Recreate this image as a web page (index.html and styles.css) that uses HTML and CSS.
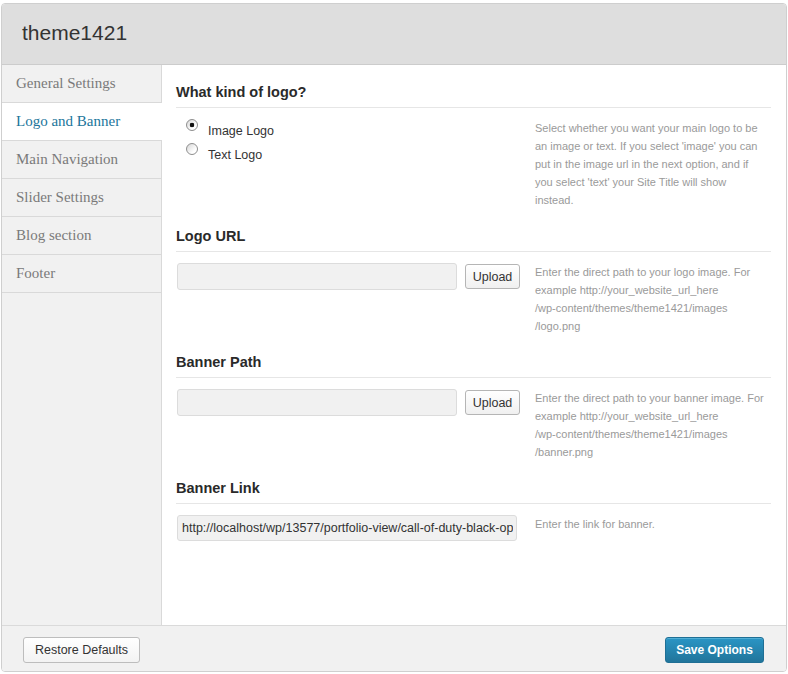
FILE: index.html
```html
<!DOCTYPE html>
<html>
<head>
<meta charset="utf-8">
<title>theme1421</title>
<link rel="stylesheet" href="styles.css">
</head>
<body>
<div class="panel">
  <div class="header"><h1 class="title">theme1421</h1></div>
  <div class="main">
    <ul class="sidebar">
      <li class="nav-item">General Settings</li>
      <li class="nav-item active">Logo and Banner</li>
      <li class="nav-item">Main Navigation</li>
      <li class="nav-item">Slider Settings</li>
      <li class="nav-item">Blog section</li>
      <li class="nav-item">Footer</li>
    </ul>
    <div class="content">
      <div class="section">
        <h3 class="heading">What kind of logo?</h3>
        <div class="row">
          <div class="controls">
            <ul class="radios">
              <li class="radio-item"><input class="radio" type="radio" name="logo" checked><span class="radio-label">Image Logo</span></li>
              <li class="radio-item"><input class="radio" type="radio" name="logo"><span class="radio-label">Text Logo</span></li>
            </ul>
          </div>
          <div class="desc">Select whether you want your main logo to be<br>an image or text. If you select 'image' you can<br>put in the image url in the next option, and if<br>you select 'text' your Site Title will show<br>instead.</div>
        </div>
      </div>
      <div class="section">
        <h3 class="heading">Logo URL</h3>
        <div class="row">
          <div class="controls upload-row">
            <input class="text-input" type="text">
            <button class="upload-btn">Upload</button>
          </div>
          <div class="desc">Enter the direct path to your logo image. For<br>example http://your_website_url_here<br>/wp-content/themes/theme1421/images<br>/logo.png</div>
        </div>
      </div>
      <div class="section">
        <h3 class="heading">Banner Path</h3>
        <div class="row">
          <div class="controls upload-row">
            <input class="text-input" type="text">
            <button class="upload-btn">Upload</button>
          </div>
          <div class="desc">Enter the direct path to your banner image. For<br>example http://your_website_url_here<br>/wp-content/themes/theme1421/images<br>/banner.png</div>
        </div>
      </div>
      <div class="section">
        <h3 class="heading">Banner Link</h3>
        <div class="row">
          <div class="controls">
            <input class="text-input wide" type="text" value="http://localhost/wp/13577/portfolio-view/call-of-duty-black-ops">
          </div>
          <div class="desc">Enter the link for banner.</div>
        </div>
      </div>
    </div>
  </div>
  <div class="footer">
    <button class="btn-restore">Restore Defaults</button>
    <button class="btn-save">Save Options</button>
  </div>
</div>
</body>
</html>
```

FILE: styles.css
```css
* { box-sizing: border-box; }

body {
  margin: 0;
  padding: 3px 0 0 1px;
  background: #fff;
  font-family: "Liberation Sans", Arial, sans-serif;
  color: #333;
}

.panel {
  width: 786px;
  height: 669px;
  border: 1px solid #cfcfcf;
  border-radius: 4px;
  overflow: hidden;
  background: #fff;
  display: flex;
  flex-direction: column;
}

.header {
  height: 61px;
  flex: none;
  background: #dedede;
  border-bottom: 1px solid #cccccc;
  padding: 17px 0 0 20px;
}

.title {
  margin: 0;
  font-size: 21px;
  line-height: 24px;
  font-weight: normal;
  color: #333;
}

.main {
  display: flex;
  height: 560px;
  flex: none;
}

.sidebar {
  list-style: none;
  margin: 0;
  padding: 0;
  width: 160px;
  flex: none;
  background: #f1f1f1;
  border-right: 1px solid #d9d9d9;
}

.nav-item {
  height: 38px;
  line-height: 37px;
  padding-left: 14px;
  border-bottom: 1px solid #d9d9d9;
  font-family: "Liberation Serif", "Times New Roman", serif;
  font-size: 15px;
  color: #7a7a7a;
}

.nav-item.active {
  background: #fff;
  color: #21759b;
  margin-right: -1px;
}

.content {
  flex: 1;
  padding: 0 15px 0 14px;
}

.section {
  padding-top: 18px;
}

.heading {
  margin: 0;
  font-size: 14.5px;
  line-height: 18px;
  font-weight: bold;
  color: #2a2a2a;
  padding-bottom: 6px;
  border-bottom: 1px solid #e6e6e6;
}

.row {
  display: flex;
  padding-top: 11px;
}

.controls {
  width: 359px;
  flex: none;
}

.upload-row {
  display: flex;
  align-items: flex-start;
}

.desc {
  width: 236px;
  font-size: 11px;
  line-height: 18px;
  color: #9a9a9a;
  white-space: nowrap;
}

.radios {
  list-style: none;
  margin: 0;
  padding: 0 0 0 10px;
}

.radio-item {
  display: flex;
  align-items: flex-start;
  height: 24px;
  line-height: 24px;
  font-size: 12.5px;
  color: #333;
}

.radio {
  -webkit-appearance: none;
  appearance: none;
  margin: 0;
  width: 12px;
  height: 12px;
  border: 1px solid #8e8e8e;
  border-radius: 50%;
  background: linear-gradient(135deg, #d6d6d6, #ffffff 70%);
  flex: none;
}

.radio:checked {
  background: radial-gradient(circle, #111 0, #111 2px, transparent 2.6px), linear-gradient(135deg, #d6d6d6, #ffffff 70%);
}

.radio-label {
  margin-left: 10px;
}

.text-input {
  margin: 0 0 0 1px;
  width: 280px;
  height: 27px;
  border: 1px solid #dcdcdc;
  border-radius: 3px;
  background: #f1f1f1;
  padding: 0 3px 0 4px;
  font-family: "Liberation Sans", Arial, sans-serif;
  font-size: 12.5px;
  color: #333;
  outline: none;
}

.text-input.wide {
  width: 340px;
  height: 26px;
}

.upload-btn {
  margin: 1px 0 0 8px;
  width: 55px;
  height: 25px;
  padding: 0;
  border: 1px solid #b5b5b5;
  border-radius: 3px;
  background: linear-gradient(#ffffff, #f0f0f0);
  font-family: "Liberation Sans", Arial, sans-serif;
  font-size: 12.5px;
  color: #333;
}

.footer {
  flex: 1;
  border-top: 1px solid #dadada;
  background: #f1f1f1;
  display: flex;
  justify-content: space-between;
  align-items: flex-start;
  padding: 11px 22px 0 21px;
}

.btn-restore {
  width: 117px;
  height: 26px;
  padding: 0;
  border: 1px solid #bdbdbd;
  border-radius: 3px;
  background: linear-gradient(#ffffff, #f3f3f3);
  font-family: "Liberation Sans", Arial, sans-serif;
  font-size: 12.5px;
  color: #333;
}

.btn-save {
  width: 99px;
  height: 26px;
  padding: 0;
  border: 1px solid #1f6f95;
  border-radius: 3px;
  background: linear-gradient(#2a95c5, #21759b);
  box-shadow: inset 0 1px 0 rgba(120, 200, 230, 0.5);
  font-family: "Liberation Sans", Arial, sans-serif;
  font-size: 12px;
  font-weight: bold;
  color: #fff;
}
```
